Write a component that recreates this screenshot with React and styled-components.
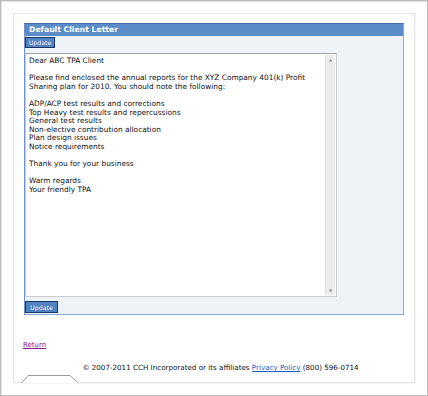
import React from 'react';
import styled, { createGlobalStyle } from 'styled-components';

const GlobalStyle = createGlobalStyle`
    html, body { margin:0; padding:0; background:#fff; }
    body { font-family:"DejaVu Sans", Verdana, sans-serif; }
`;

const letterLines = [
    'Dear ABC TPA Client',
    '',
    'Please find enclosed the annual reports for the XYZ Company 401(k) Profit',
    'Sharing plan for 2010. You should note the following:',
    '',
    'ADP/ACP test results and corrections',
    'Top Heavy test results and repercussions',
    'General test results',
    'Non-elective contribution allocation',
    'Plan design issues',
    'Notice requirements',
    '',
    'Thank you for your business',
    '',
    'Warm regards',
    'Your friendly TPA',
];

const App = () => {
    return (
        <>
            <GlobalStyle />
            <Frame>
                <Panel>
                    <LetterBox>
                        <Header>Default Client Letter</Header>
                        <UpdateButton top>Update</UpdateButton>
                        <TextArea>
                            <TextBody>
                                {letterLines.map((line, i) => (
                                    <Line key={i}>{line || '\u00a0'}</Line>
                                ))}
                            </TextBody>
                            <ScrollBar>
                                <Arrow>▲</Arrow>
                                <Arrow>▼</Arrow>
                            </ScrollBar>
                        </TextArea>
                        <UpdateButton>Update</UpdateButton>
                    </LetterBox>

                    <ReturnLink href="#">Return</ReturnLink>

                    <Footer>
                        © 2007-2011 CCH Incorporated or its affiliates <PolicyLink href="#">Privacy Policy</PolicyLink> (800) 596-0714
                    </Footer>

                    <Tab width="60" height="9" viewBox="0 0 60 9">
                        <path d="M0.5 9 L7 1.5 L49 1.5 L57.5 9" fill="#fff" stroke="#9a9a9a" strokeWidth="1" />
                    </Tab>
                </Panel>
            </Frame>
        </>
    );
}

const Frame = styled.div`
    width:428px;
    height:396px;
    box-sizing:border-box;
    border:1px solid #bcbcbc;
    box-shadow:inset 1px 1px 0 #e2e2e2;
    padding:12px;
    background:#fff;
`;

const Panel = styled.div`
    height:100%;
    box-sizing:border-box;
    border:1px solid #e4e4e4;
    box-shadow:1px 1px 1px rgba(0,0,0,0.04);
    padding:9px 10px 0 10px;
    display:flex;
    flex-direction:column;
`;

const LetterBox = styled.div`
    height:292px;
    box-sizing:border-box;
    border:1px solid #8aa8dc;
    border-top-color:#3f6aab;
    border-left-color:#6f93cf;
    background:#eef3f7;
    display:flex;
    flex-direction:column;
    align-items:flex-start;
`;

const Header = styled.div`
    align-self:stretch;
    height:12px;
    line-height:12px;
    background:#5b8cc7;
    color:#fff;
    font-weight:bold;
    font-size:7.7px;
    padding-left:4px;
`;

const UpdateButton = styled.button`
    margin:${props => props.top ? '1px 0 5px 0' : '4px 0 0 0'};
    width:${props => props.top ? '30px' : '33px'};
    height:${props => props.top ? '11px' : '12px'};
    padding:0;
    border:1px solid #1d3868;
    background:#4f82c0;
    color:#eef4fb;
    font-family:"DejaVu Sans", Verdana, sans-serif;
    font-size:6.2px;
    line-height:9px;
`;

const TextArea = styled.div`
    width:312px;
    height:244px;
    box-sizing:border-box;
    border:1px solid #c9ccd0;
    border-top-color:#a0a4aa;
    background:#fff;
    display:flex;
`;

const TextBody = styled.div`
    flex:1;
    padding:3px 0 0 3px;
    font-size:7.4px;
    line-height:8.6px;
    color:#111;
`;

const Line = styled.div`
    white-space:nowrap;
`;

const ScrollBar = styled.div`
    width:9px;
    margin:1px 1px 1px 0;
    background:#ededed;
    border-left:1px solid #e0e0e0;
    display:flex;
    flex-direction:column;
    justify-content:space-between;
    align-items:center;
`;

const Arrow = styled.span`
    font-size:4px;
    line-height:9px;
    color:#8a8a8a;
`;

const ReturnLink = styled.a`
    margin:26px 0 0 -1px;
    font-size:7px;
    line-height:9px;
    color:#8a1a8a;
    text-decoration:underline;
    align-self:flex-start;
`;

const Footer = styled.div`
    margin-top:13px;
    padding-left:13px;
    text-align:center;
    font-size:7.15px;
    line-height:9px;
    color:#111;
`;

const PolicyLink = styled.a`
    color:#1f5fc4;
    text-decoration:underline;
`;

const Tab = styled.svg`
    display:block;
    margin:auto 0 -1px -3px;
`;

export default App;
